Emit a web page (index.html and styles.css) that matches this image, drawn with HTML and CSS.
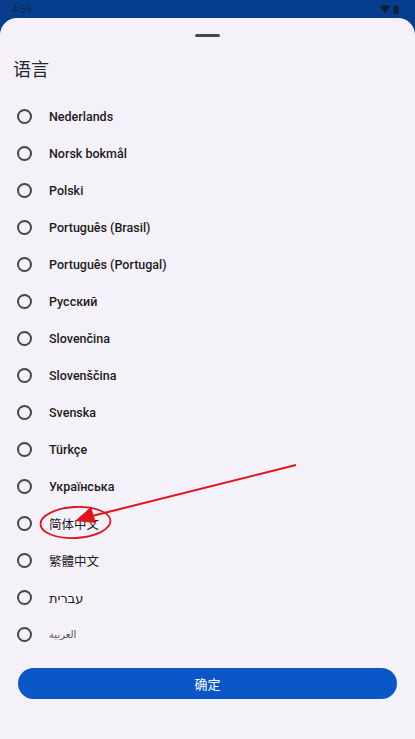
FILE: index.html
```html
<!DOCTYPE html>
<html>
<head>
<meta charset="utf-8">
<link rel="stylesheet" href="styles.css">
</head>
<body>
<div class="status">
  <span class="time">4:59</span>
  <span class="icons">
    <svg width="10" height="8" viewBox="0 0 10 8"><path d="M0 1.5 Q5 -1.5 10 1.5 L5 8 Z" fill="#0f1f3a"/></svg>
    <svg width="6" height="9" viewBox="0 0 6 9"><rect x="0.5" y="1" width="5" height="8" rx="0.8" fill="#0f1f3a"/><rect x="2" y="0" width="2" height="1.5" fill="#0f1f3a"/></svg>
  </span>
</div>
<div class="sheet">
  <div class="handle"></div>
  <h1 class="title">语言</h1>
  <ul class="list">
    <li class="row"><span class="radio"></span><span class="label">Nederlands</span></li>
    <li class="row"><span class="radio"></span><span class="label">Norsk bokmål</span></li>
    <li class="row"><span class="radio"></span><span class="label">Polski</span></li>
    <li class="row"><span class="radio"></span><span class="label">Português (Brasil)</span></li>
    <li class="row"><span class="radio"></span><span class="label">Português (Portugal)</span></li>
    <li class="row"><span class="radio"></span><span class="label">Русский</span></li>
    <li class="row"><span class="radio"></span><span class="label">Slovenčina</span></li>
    <li class="row"><span class="radio"></span><span class="label">Slovenščina</span></li>
    <li class="row"><span class="radio"></span><span class="label">Svenska</span></li>
    <li class="row"><span class="radio"></span><span class="label">Türkçe</span></li>
    <li class="row"><span class="radio"></span><span class="label">Українська</span></li>
    <li class="row"><span class="radio"></span><span class="label cjk">简体中文</span></li>
    <li class="row"><span class="radio"></span><span class="label cjk">繁體中文</span></li>
    <li class="row"><span class="radio"></span><span class="label hebrew">עברית</span></li>
    <li class="row"><span class="radio"></span><span class="label arabic">العربية</span></li>
  </ul>
  <button class="ok">确定</button>
</div>
<svg class="annot" width="415" height="739" viewBox="0 0 415 739">
  <ellipse cx="75.5" cy="522.5" rx="35" ry="15.5" fill="none" stroke="#e0141c" stroke-width="1.8" transform="rotate(-3 75.5 522.5)"/>
  <line x1="296" y1="465" x2="92" y2="516" stroke="#e0141c" stroke-width="2"/>
  <polygon points="75,521 91,507 96,523" fill="#e0141c"/>
</svg>
</body>
</html>
```
FILE: styles.css
```css
* { box-sizing: border-box; }
html, body {
  margin: 0;
  padding: 0;
  width: 415px;
  height: 739px;
  overflow: hidden;
  background: #063d8c;
  font-family: Roboto, "Noto Sans", "Noto Sans CJK SC", sans-serif;
  position: relative;
}
.status {
  height: 18px;
  display: flex;
  align-items: center;
  justify-content: space-between;
  padding: 0 16px 0 12px;
}
.time {
  font-size: 10px;
  color: #0f1f3a;
  opacity: 0.7;
}
.icons {
  display: flex;
  gap: 3px;
  align-items: center;
}
.sheet {
  background: #f5f1f8;
  border-radius: 17px 17px 0 0;
  height: 721px;
  padding-top: 16px;
  display: flex;
  flex-direction: column;
}
.handle {
  width: 25px;
  height: 3px;
  border-radius: 2px;
  background: #49454f;
  align-self: center;
}
.title {
  margin: 19px 0 0 13px;
  font-size: 18px;
  line-height: 24px;
  font-weight: 400;
  color: #2a282e;
  font-family: "Noto Sans CJK SC", sans-serif;
}
.list {
  list-style: none;
  margin: 18px 0 0 0;
  padding: 0;
}
.row {
  height: 37px;
  display: flex;
  align-items: center;
  padding-left: 17px;
}
.radio {
  width: 15px;
  height: 15px;
  border: 2px solid #49454f;
  border-radius: 50%;
  flex: none;
}
.label {
  margin-left: 17px;
  font-size: 12.5px;
  font-weight: 500;
  color: #1d1b20;
}
.label.cjk {
  font-family: "Noto Sans CJK SC", sans-serif;
  font-weight: 400;
  font-size: 12.5px;
}
.label.hebrew {
  font-weight: 400;
  font-size: 13px;
  font-family: "Noto Sans", "DejaVu Sans", sans-serif;
}
.label.arabic {
  font-weight: 400;
  font-size: 10px;
  color: #555;
  font-family: "DejaVu Sans", sans-serif;
}
.ok {
  margin: 15px 18px 0 18px;
  height: 31px;
  border: none;
  border-radius: 16px;
  background: #0b57c8;
  color: #fff;
  font-size: 13px;
  font-family: "Noto Sans CJK SC", sans-serif;
}
.annot {
  position: absolute;
  left: 0;
  top: 0;
  pointer-events: none;
}
```
